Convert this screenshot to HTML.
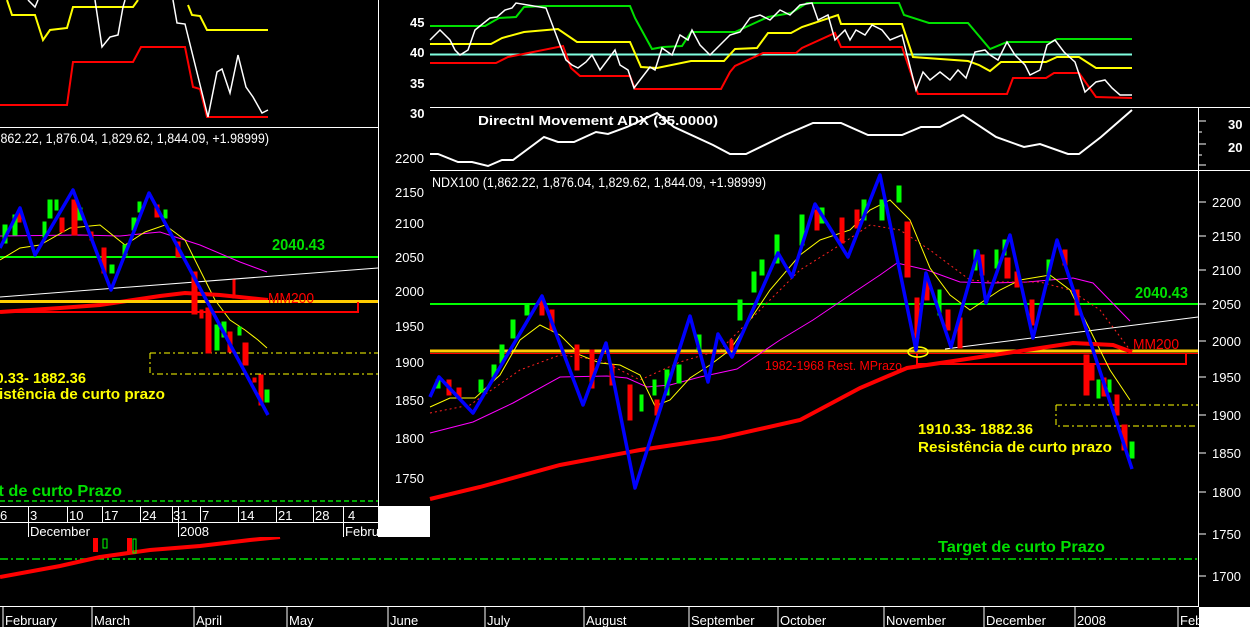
<!DOCTYPE html>
<html><head><meta charset="utf-8"><style>
html,body{margin:0;padding:0;background:#000;width:1250px;height:627px;overflow:hidden}
svg{display:block}
text{font-family:"Liberation Sans",Arial,sans-serif}
.ax{fill:#fff;font-size:13px;font-weight:bold}
.dt{fill:#fff;font-size:13px}
</style></head><body>
<svg width="1250" height="627" viewBox="0 0 1250 627" xmlns="http://www.w3.org/2000/svg">
<rect width="1250" height="627" fill="#000"/>

<g class="ax" font-size="15">
<text x="410" y="27">45</text><text x="410" y="57">40</text><text x="410" y="88">35</text><text x="410" y="118">30</text>
</g>
<g class="ax" font-size="13" style="font-weight:normal">
<text x="395" y="163">2200</text><text x="395" y="197">2150</text><text x="395" y="228">2100</text><text x="395" y="262">2050</text><text x="395" y="296">2000</text><text x="395" y="331">1950</text><text x="395" y="367">1900</text><text x="395" y="405">1850</text><text x="395" y="443">1800</text><text x="395" y="483">1750</text>
</g>
<line x1="430" y1="107.5" x2="1250" y2="107.5" stroke="#fff"/>
<line x1="430" y1="170.5" x2="1250" y2="170.5" stroke="#fff"/>
<line x1="1198.5" y1="107" x2="1198.5" y2="607" stroke="#fff"/>
<g stroke="#fff">
<line x1="1198" y1="121" x2="1206" y2="121"/><line x1="1198" y1="144" x2="1206" y2="144"/><line x1="1198" y1="132" x2="1202" y2="132"/><line x1="1198" y1="155" x2="1202" y2="155"/><line x1="1198" y1="165" x2="1206" y2="165"/>
<line x1="1198" y1="202" x2="1206" y2="202"/><line x1="1198" y1="236" x2="1206" y2="236"/><line x1="1198" y1="270" x2="1206" y2="270"/><line x1="1198" y1="304" x2="1206" y2="304"/><line x1="1198" y1="341" x2="1206" y2="341"/><line x1="1198" y1="377" x2="1206" y2="377"/><line x1="1198" y1="415" x2="1206" y2="415"/><line x1="1198" y1="453" x2="1206" y2="453"/><line x1="1198" y1="492" x2="1206" y2="492"/><line x1="1198" y1="534" x2="1206" y2="534"/><line x1="1198" y1="576" x2="1206" y2="576"/>
</g>
<g class="ax" font-size="15"><text x="1228" y="129">30</text><text x="1228" y="152">20</text></g>
<g class="ax" style="font-weight:normal" font-size="14">
<text x="1212" y="207">2200</text><text x="1212" y="241">2150</text><text x="1212" y="275">2100</text><text x="1212" y="309">2050</text><text x="1212" y="346">2000</text><text x="1212" y="382">1950</text><text x="1212" y="420">1900</text><text x="1212" y="458">1850</text><text x="1212" y="497">1800</text><text x="1212" y="539">1750</text><text x="1212" y="581">1700</text>
</g>

<line x1="430" y1="54.5" x2="1132" y2="54.5" stroke="#80ffe0" stroke-width="2"/>
<polyline fill="none" stroke="#00e000" stroke-width="2" points="430,26 485,26 499,18 516,17 524,7 546,6 630,6 635,18 652,49 663,47 682,46 691,32 735,32 757,22 768,17 791,13 807,3 899,3 904,15 929,23 968,23 990,49 1007,42 1051,42 1057,39 1132,39"/>
<polyline fill="none" stroke="#ffff00" stroke-width="2" points="430,44 491,44 502,38 524,32 558,29 577,42 630,42 641,67 657,68 691,61 724,61 735,49 757,48 768,33 791,33 802,27 838,15 841,24 902,24 913,57 968,61 979,65 990,71 1001,62 1046,62 1057,57 1079,57 1096,68 1132,68"/>
<polyline fill="none" stroke="#ff0000" stroke-width="2" points="430,63 496,63 508,57 563,46 571,68 580,76 630,76 635,89 721,89 730,72 735,66 763,53 796,53 802,48 835,33 841,47 902,47 918,94 1007,94 1013,78 1046,78 1054,73 1079,73 1096,97 1132,98"/>
<polyline fill="none" stroke="#fff" stroke-width="1.5" points="430,40 440,30 450,40 455,50 460,55 468,50 475,30 490,18 497,17 505,10 512,8 516,3 546,8 560,45 566,60 572,65 578,68 586,62 592,55 600,70 606,62 615,50 620,65 628,70 634,88 640,80 650,67 655,70 662,48 672,55 680,35 688,40 692,30 700,45 710,55 720,45 730,35 740,32 750,18 760,15 770,20 780,10 790,15 800,5 812,3 818,20 828,15 835,40 845,30 850,40 856,30 865,35 872,25 882,30 890,40 902,35 916,90 923,72 930,80 940,72 950,80 958,70 966,78 975,52 985,50 990,55 998,60 1007,42 1015,55 1025,65 1030,75 1040,70 1047,45 1055,40 1064,52 1075,62 1085,92 1096,82 1105,80 1112,88 1120,95 1132,95"/>

<text x="478" y="125" class="ax" font-size="15" textLength="240" lengthAdjust="spacingAndGlyphs">Directnl Movement ADX (35.0000)</text>
<polyline fill="none" stroke="#fff" stroke-width="2" points="430,154 438,154 458,162 472,162 488,166 502,160 513,160 544,137 558,142 574,142 596,132 608,134 627,127 657,113 674,127 713,145 730,154 746,154 785,135 813,123 841,123 868,135 902,135 921,127 940,127 963,115 996,137 1024,147 1040,144 1068,154 1079,154 1101,137 1132,110"/>

<text x="432" y="187" fill="#fff" font-size="14" textLength="334" lengthAdjust="spacingAndGlyphs">NDX100 (1,862.22, 1,876.04, 1,829.62, 1,844.09, +1.98999)</text>
<line x1="430" y1="304" x2="1198" y2="304" stroke="#00ff00" stroke-width="2"/>
<line x1="430" y1="351" x2="1198" y2="351" stroke="#ffcc00" stroke-width="3"/>
<line x1="430" y1="353.5" x2="1198" y2="353.5" stroke="#ff0000" stroke-width="1"/>
<polyline fill="none" stroke="#ff0000" stroke-width="2" points="917,353 917,364 1186,364 1186,353"/>
<line x1="945" y1="349" x2="1198" y2="317" stroke="#fff" stroke-width="1"/>
<polyline fill="none" stroke="#ffff00" stroke-width="1" stroke-dasharray="6,3,2,3" points="1056,405 1198,405"/>
<polyline fill="none" stroke="#ffff00" stroke-width="1" stroke-dasharray="6,3,2,3" points="1056,405 1056,426 1198,426"/>
<line x1="0" y1="559" x2="1198" y2="559" stroke="#00e000" stroke-width="1.5" stroke-dasharray="8,3,2,3"/>
<ellipse cx="918" cy="352" rx="10" ry="5" fill="none" stroke="#ffff00" stroke-width="1.5"/>

<polyline fill="none" stroke="#ff00ff" stroke-width="1" points="430,433 473,422 513,403 560,377 607,376 627,378 647,387 670,385 700,377 737,369 780,340 813,320 853,293 880,275 897,263 927,270 960,282 993,283 1027,282 1073,278 1093,283 1130,321"/>
<polyline fill="none" stroke="#ff2020" stroke-width="1" stroke-dasharray="2,3" points="430,413 470,405 520,370 560,355 600,360 640,380 680,362 720,350 760,310 800,270 840,245 870,225 900,230 930,250 970,280 1000,282 1040,282 1070,290 1100,310 1130,350"/>
<polyline fill="none" stroke="#ffff00" stroke-width="1" points="430,407 450,398 475,398 500,375 520,340 540,325 560,335 580,355 600,363 620,365 640,375 655,406 670,400 690,378 710,365 730,350 750,320 770,290 800,255 820,240 850,230 870,210 890,200 910,220 930,268 950,295 970,310 1000,290 1020,280 1050,275 1070,290 1090,330 1110,370 1130,400"/>
<polyline fill="none" stroke="#ff0000" stroke-width="4" points="430,499 480,487 560,465 640,450 720,438 800,420 860,388 907,368 960,360 1027,350 1073,343 1113,345 1132,352"/>

<g stroke-width="1">
<g fill="#00ff00" stroke="#00ff00">
<rect x="436" y="380" width="4" height="8"/><rect x="479" y="380" width="4" height="12"/><rect x="492" y="365" width="4" height="12"/><rect x="500" y="345" width="4" height="18"/><rect x="511" y="320" width="4" height="18"/><rect x="525" y="305" width="4" height="10"/><rect x="640" y="395" width="3" height="16"/><rect x="653" y="380" width="3" height="15"/><rect x="665" y="370" width="4" height="25"/><rect x="677" y="365" width="4" height="18"/><rect x="697" y="335" width="4" height="15"/><rect x="738" y="300" width="4" height="20"/><rect x="752" y="272" width="4" height="20"/><rect x="760" y="260" width="4" height="15"/><rect x="775" y="235" width="4" height="28"/><rect x="800" y="215" width="4" height="30"/><rect x="820" y="208" width="4" height="15"/><rect x="862" y="200" width="4" height="20"/><rect x="880" y="200" width="4" height="20"/><rect x="897" y="186" width="4" height="16"/><rect x="938" y="290" width="3" height="25"/><rect x="974" y="250" width="3" height="20"/><rect x="995" y="250" width="3" height="18"/><rect x="1003" y="240" width="3" height="15"/><rect x="1047" y="260" width="3" height="20"/><rect x="1097" y="380" width="3" height="18"/><rect x="1108" y="380" width="3" height="12"/><rect x="1130" y="442" width="4" height="16"/>
</g>
<g fill="#ff0000" stroke="#ff0000">
<rect x="447" y="380" width="4" height="15"/><rect x="457" y="388" width="4" height="10"/><rect x="540" y="300" width="4" height="15"/><rect x="550" y="310" width="4" height="20"/><rect x="575" y="345" width="4" height="25"/><rect x="590" y="350" width="4" height="38"/><rect x="610" y="365" width="4" height="20"/><rect x="628" y="385" width="4" height="35"/><rect x="655" y="400" width="4" height="15"/><rect x="730" y="340" width="3" height="10"/><rect x="815" y="210" width="4" height="20"/><rect x="840" y="218" width="4" height="25"/><rect x="855" y="210" width="4" height="18"/><rect x="905" y="222" width="5" height="55"/><rect x="915" y="298" width="4" height="40"/><rect x="925" y="280" width="4" height="20"/><rect x="946" y="310" width="4" height="20"/><rect x="958" y="318" width="4" height="30"/><rect x="980" y="255" width="4" height="20"/><rect x="1005" y="258" width="5" height="20"/><rect x="1015" y="272" width="4" height="15"/><rect x="1030" y="300" width="4" height="25"/><rect x="1063" y="250" width="4" height="15"/><rect x="1075" y="290" width="4" height="25"/><rect x="1084" y="355" width="5" height="40"/><rect x="1090" y="365" width="4" height="15"/><rect x="1102" y="378" width="4" height="18"/><rect x="1115" y="395" width="4" height="20"/><rect x="1122" y="425" width="5" height="25"/>
</g>
</g>
<polyline fill="none" stroke="#0000ff" stroke-width="3.5" stroke-linejoin="round" points="430,397 439,377 473,413 542,296 583,405 606,343 635,488 690,316 708,382 718,334 732,357 778,253 792,277 815,204 848,257 880,175 916,350 926,273 951,347 978,251 986,303 1010,235 1033,338 1057,240 1132,469"/>

<text x="1135" y="298" fill="#00e000" font-size="16" font-weight="bold" textLength="53" lengthAdjust="spacingAndGlyphs">2040.43</text>
<text x="1133" y="349" fill="#ff0000" font-size="15" textLength="46" lengthAdjust="spacingAndGlyphs">MM200</text>
<text x="765" y="370" fill="#ff0000" font-size="13" textLength="137" lengthAdjust="spacingAndGlyphs">1982-1968 Rest. MPrazo</text>
<text x="918" y="434" fill="#ffff00" font-size="15" font-weight="bold" textLength="115" lengthAdjust="spacingAndGlyphs">1910.33- 1882.36</text>
<text x="918" y="452" fill="#ffff00" font-size="15" font-weight="bold" textLength="194" lengthAdjust="spacingAndGlyphs">Resistência de curto prazo</text>
<text x="938" y="552" fill="#00e000" font-size="16" font-weight="bold" textLength="167" lengthAdjust="spacingAndGlyphs">Target de curto Prazo</text>

<line x1="0" y1="606.5" x2="1198" y2="606.5" stroke="#fff"/>
<rect x="1199" y="607" width="51" height="20" fill="#fff"/>
<g stroke="#fff">
<line x1="3" y1="607" x2="3" y2="627"/><line x1="92" y1="607" x2="92" y2="627"/><line x1="194" y1="607" x2="194" y2="627"/><line x1="287" y1="607" x2="287" y2="627"/><line x1="388" y1="607" x2="388" y2="627"/><line x1="485" y1="607" x2="485" y2="627"/><line x1="584" y1="607" x2="584" y2="627"/><line x1="689" y1="607" x2="689" y2="627"/><line x1="778" y1="607" x2="778" y2="627"/><line x1="884" y1="607" x2="884" y2="627"/><line x1="984" y1="607" x2="984" y2="627"/><line x1="1075" y1="607" x2="1075" y2="627"/><line x1="1178" y1="607" x2="1178" y2="627"/>
</g>
<g class="dt">
<text x="5" y="625">February</text><text x="94" y="625">March</text><text x="196" y="625">April</text><text x="289" y="625">May</text><text x="390" y="625">June</text><text x="487" y="625">July</text><text x="586" y="625">August</text><text x="691" y="625">September</text><text x="780" y="625">October</text><text x="886" y="625">November</text><text x="986" y="625">December</text><text x="1077" y="625">2008</text><text x="1180" y="625">Feb</text>
</g>

<polyline fill="none" stroke="#ff0000" stroke-width="4" points="0,577 60,566 100,557 150,550 200,546 250,540 280,537"/>
<g fill="#ff0000"><rect x="93" y="538" width="5" height="14"/><rect x="127" y="538" width="5" height="16"/></g>
<g fill="none" stroke="#00ff00"><rect x="103" y="539" width="4" height="9"/><rect x="133" y="539" width="3" height="14"/></g>
<rect x="379" y="506" width="51" height="31" fill="#fff"/>

<rect x="0" y="0" width="378" height="537" fill="#000"/>
<line x1="378.5" y1="0" x2="378.5" y2="537" stroke="#fff"/>
<line x1="0" y1="127.5" x2="378" y2="127.5" stroke="#fff"/>
<polyline fill="none" stroke="#ffff00" stroke-width="2" points="7,0 12,15 35,15 43,40 50,30 67,28 73,7 133,7 138,0"/>
<polyline fill="none" stroke="#ffff00" stroke-width="2" points="188,5 192,15 200,16 207,30 268,30"/>
<polyline fill="none" stroke="#ff0000" stroke-width="2" points="0,105 67,105 73,62 133,62 141,47 185,47 193,87 200,89 207,117 268,117"/>
<polyline fill="none" stroke="#fff" stroke-width="1.5" points="28,0 35,7 38,0"/>
<polyline fill="none" stroke="#fff" stroke-width="1.5" points="95,0 102,47 110,37 118,35 123,7 125,0"/>
<polyline fill="none" stroke="#fff" stroke-width="1.5" points="173,0 177,23 185,24 208,117 217,72 222,69 230,93 238,55 246,87 253,97 262,113 268,110"/>
<text x="-3" y="143" fill="#fff" font-size="14" textLength="272" lengthAdjust="spacingAndGlyphs">,862.22, 1,876.04, 1,829.62, 1,844.09, +1.98999)</text>
<line x1="0" y1="257" x2="378" y2="257" stroke="#00ff00" stroke-width="2"/>
<line x1="0" y1="297" x2="378" y2="268" stroke="#fff" stroke-width="1"/>
<polyline fill="none" stroke="#ff00ff" stroke-width="1" points="0,236 80,235 120,236 160,232 200,245 240,262 267,272"/>
<polyline fill="none" stroke="#ffff00" stroke-width="1" points="0,260 20,248 40,245 70,228 100,225 125,245 145,232 165,225 185,240 200,270 215,300 230,320 245,330 258,340 267,348"/>
<polyline fill="none" stroke="#ff0000" stroke-width="4" points="0,312 60,308 100,305 160,296 185,293 220,295 268,300"/>
<line x1="0" y1="301.5" x2="378" y2="301.5" stroke="#ffcc00" stroke-width="3"/>
<polyline fill="none" stroke="#ff0000" stroke-width="2" points="0,312 358,312 358,302"/>
<polyline fill="none" stroke="#ffff00" stroke-width="1" stroke-dasharray="6,3,2,3" points="150,353 378,353"/>
<polyline fill="none" stroke="#ffff00" stroke-width="1" stroke-dasharray="6,3,2,3" points="150,353 150,374 378,374"/>
<line x1="0" y1="501" x2="378" y2="501" stroke="#00e000" stroke-width="1.5" stroke-dasharray="5,3"/>
<g fill="#00ff00" stroke="#00ff00">
<rect x="3" y="225" width="4" height="18"/><rect x="13" y="215" width="4" height="20"/><rect x="43" y="222" width="3" height="15"/><rect x="48" y="200" width="4" height="18"/><rect x="55" y="200" width="3" height="10"/><rect x="78" y="208" width="4" height="12"/><rect x="110" y="265" width="4" height="8"/><rect x="123" y="245" width="4" height="10"/><rect x="132" y="218" width="4" height="12"/><rect x="138" y="202" width="3" height="10"/><rect x="164" y="210" width="3" height="8"/><rect x="215" y="325" width="4" height="25"/><rect x="222" y="322" width="4" height="15"/><rect x="238" y="327" width="3" height="8"/><rect x="265" y="390" width="4" height="12"/>
</g>
<g fill="#ff0000" stroke="#ff0000">
<rect x="18" y="210" width="3" height="12"/><rect x="60" y="218" width="4" height="14"/><rect x="72" y="200" width="5" height="35"/><rect x="90" y="232" width="3" height="8"/><rect x="102" y="248" width="4" height="25"/><rect x="155" y="205" width="4" height="12"/><rect x="176" y="242" width="4" height="15"/><rect x="192" y="272" width="5" height="42"/><rect x="200" y="310" width="3" height="8"/><rect x="206" y="308" width="5" height="45"/><rect x="228" y="332" width="4" height="20"/><rect x="243" y="343" width="5" height="22"/><rect x="253" y="378" width="3" height="4"/><rect x="259" y="375" width="4" height="30"/><rect x="233" y="280" width="2" height="18"/>
</g>
<polyline fill="none" stroke="#0000ff" stroke-width="3.5" stroke-linejoin="round" points="0,248 20,208 35,255 73,190 111,290 149,193 217,320 268,415"/>
<text x="272" y="250" fill="#00e000" font-size="16" font-weight="bold" textLength="53" lengthAdjust="spacingAndGlyphs">2040.43</text>
<text x="268" y="303" fill="#ff0000" font-size="15" textLength="46" lengthAdjust="spacingAndGlyphs">MM200</text>
<text x="-29" y="383" fill="#ffff00" font-size="15" font-weight="bold" textLength="115" lengthAdjust="spacingAndGlyphs">1910.33- 1882.36</text>
<text x="-29" y="399" fill="#ffff00" font-size="15" font-weight="bold" textLength="194" lengthAdjust="spacingAndGlyphs">Resistência de curto prazo</text>
<text x="-45" y="496" fill="#00e000" font-size="16" font-weight="bold" textLength="167" lengthAdjust="spacingAndGlyphs">Target de curto Prazo</text>
<line x1="0" y1="506.5" x2="378" y2="506.5" stroke="#fff"/>
<line x1="0" y1="522.5" x2="378" y2="522.5" stroke="#fff"/>
<g stroke="#fff">
<line x1="28.5" y1="506" x2="28.5" y2="537"/><line x1="67.5" y1="506" x2="67.5" y2="523"/><line x1="102.5" y1="506" x2="102.5" y2="523"/><line x1="140.5" y1="506" x2="140.5" y2="523"/><line x1="172.5" y1="506" x2="172.5" y2="523"/><line x1="178.5" y1="506" x2="178.5" y2="537"/><line x1="200.5" y1="506" x2="200.5" y2="523"/><line x1="238.5" y1="506" x2="238.5" y2="523"/><line x1="276.5" y1="506" x2="276.5" y2="523"/><line x1="313.5" y1="506" x2="313.5" y2="523"/><line x1="343.5" y1="506" x2="343.5" y2="537"/>
</g>
<g class="dt">
<text x="0" y="520">6</text><text x="30" y="520">3</text><text x="69" y="520">10</text><text x="104" y="520">17</text><text x="142" y="520">24</text><text x="173" y="520">31</text><text x="202" y="520">7</text><text x="240" y="520">14</text><text x="278" y="520">21</text><text x="315" y="520">28</text><text x="348" y="520">4</text>
<text x="30" y="536">December</text><text x="180" y="536">2008</text><text x="345" y="536">Febru</text>
</g>
</svg>
</body></html>
